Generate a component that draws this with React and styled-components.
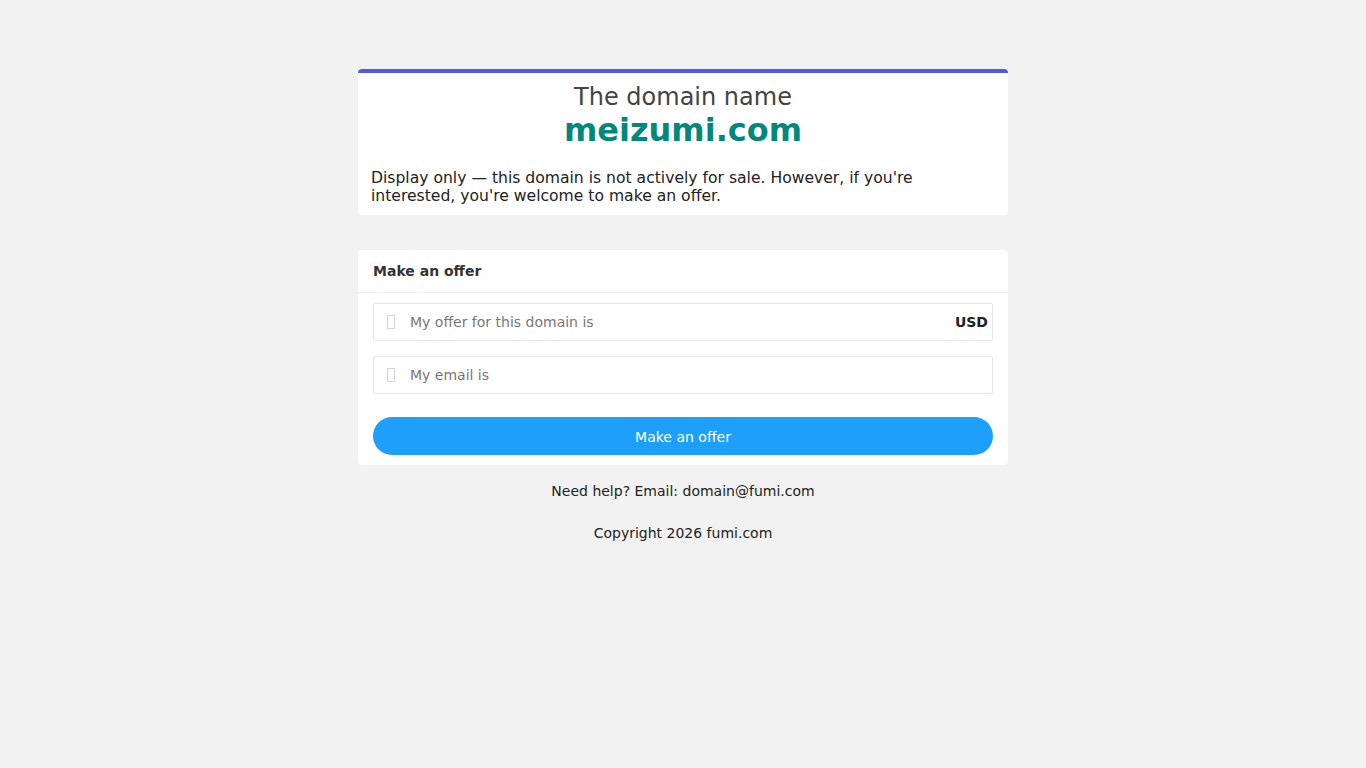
import React from 'react'
import styled, { createGlobalStyle } from 'styled-components'

const Global = createGlobalStyle`
  body {
    margin: 0;
    background: #f2f2f2;
    font-family: "DejaVu Sans", Verdana, sans-serif;
    color: #222;
  }
`;

const Page = styled.div`
  display: flex;
  flex-direction: column;
  align-items: center;
  padding-top: 69px;
`;

const Card = styled.div`
  width: 650px;
  box-sizing: border-box;
  background: #fff;
  border-radius: 4px;
  border-top: ${p => (p.accent ? '4px solid #5458ea' : 'none')};
  margin-bottom: ${p => p.gap || 0}px;
`;

const Intro = styled.div`
  padding: 10px 13px 10px;
`;

const Lead = styled.div`
  text-align: center;
  font-size: 24px;
  line-height: 28px;
  color: #444;
`;

const Domain = styled.h1`
  margin: 0;
  text-align: center;
  font-size: 32px;
  line-height: 38px;
  font-weight: bold;
  color: #00897b;
`;

const Note = styled.p`
  margin: 20px 0 0;
  font-size: 15.6px;
  line-height: 18px;
  color: #222;
`;

const Header = styled.div`
  height: 42px;
  display: flex;
  align-items: center;
  padding: 0 15px;
  font-size: 14px;
  font-weight: bold;
  color: #333;
  border-bottom: 1px solid #f0f0f0;
`;

const Form = styled.form`
  display: flex;
  flex-direction: column;
  padding: 10px 15px 10px;
`;

const Field = styled.label`
  display: flex;
  align-items: center;
  height: 38px;
  box-sizing: border-box;
  border: 1px solid #e6e6e6;
  border-radius: 2px;
  padding: 0 4px 0 13px;
  margin-bottom: ${p => p.gap}px;
`;

const Tofu = styled.span`
  width: 8px;
  height: 14px;
  box-sizing: border-box;
  border: 1px solid #d4d4d4;
  margin-right: 15px;
  flex: none;
`;

const Input = styled.input`
  flex: 1;
  border: none;
  outline: none;
  background: transparent;
  font-family: inherit;
  font-size: 14px;
  color: #222;
  padding: 0;
  &::placeholder {
    color: #777;
  }
`;

const Unit = styled.span`
  font-size: 14px;
  font-weight: bold;
  color: #222;
`;

const Button = styled.button`
  height: 38px;
  border: none;
  border-radius: 19px;
  background: #1e9ffc;
  color: #fff;
  font-family: inherit;
  font-size: 14px;
  padding-top: 2px;
  cursor: pointer;
`;

const Footer = styled.div`
  margin-top: 18px;
  display: flex;
  flex-direction: column;
  gap: 26px;
  font-size: 14px;
  line-height: 16px;
  text-align: center;
  color: #222;
`;

export default function App() {
  return (
    <Page>
      <Global />
      <Card accent gap={35}>
        <Intro>
          <Lead>The domain name</Lead>
          <Domain>meizumi.com</Domain>
          <Note>
            Display only — this domain is not actively for sale. However, if you're
            interested, you're welcome to make an offer.
          </Note>
        </Intro>
      </Card>
      <Card>
        <Header>Make an offer</Header>
        <Form onSubmit={e => e.preventDefault()}>
          <Field gap={15}>
            <Tofu />
            <Input placeholder="My offer for this domain is" />
            <Unit>USD</Unit>
          </Field>
          <Field gap={23}>
            <Tofu />
            <Input placeholder="My email is" />
          </Field>
          <Button type="submit">Make an offer</Button>
        </Form>
      </Card>
      <Footer>
        <div>Need help? Email: domain@fumi.com</div>
        <div>Copyright 2026 fumi.com</div>
      </Footer>
    </Page>
  )
}
